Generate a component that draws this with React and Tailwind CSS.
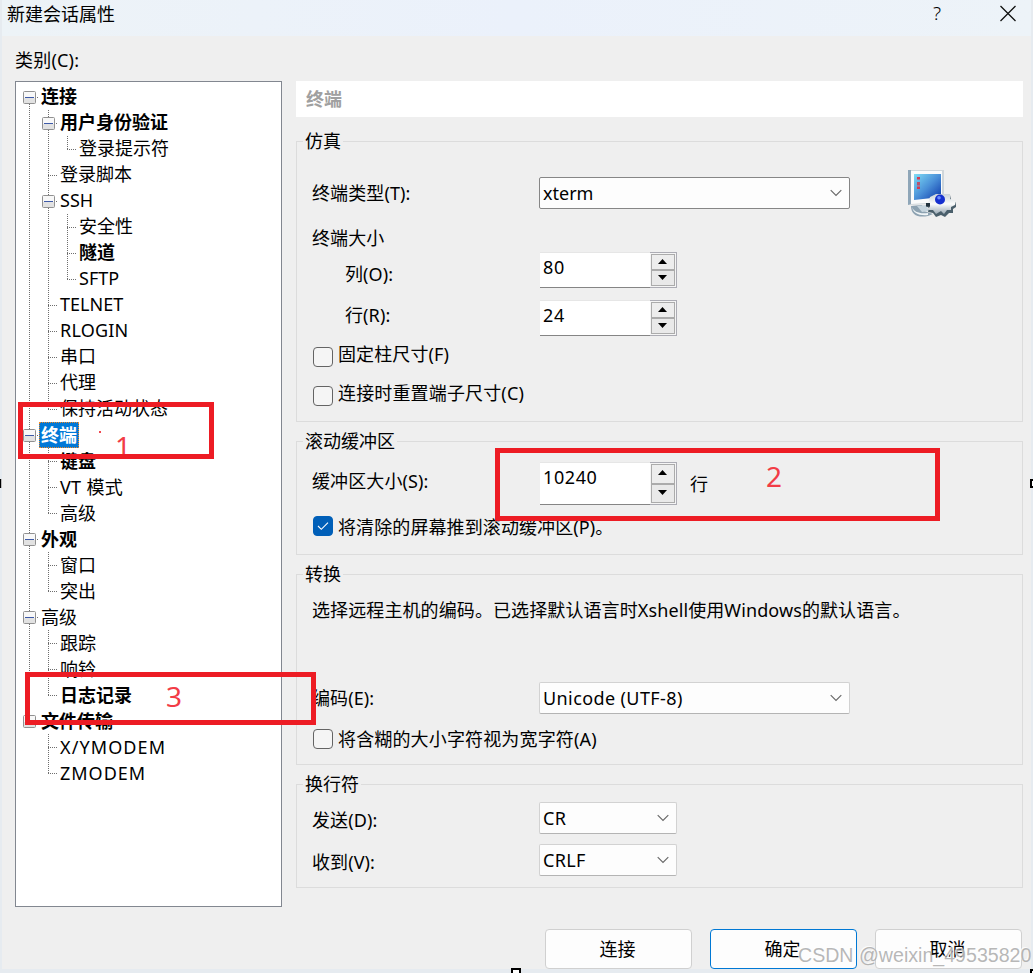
const TREE = [
  { text: "连接", level: 0, open: true, bold: true, first: true },
  { text: "用户身份验证", level: 1, open: true, bold: true },
  { text: "登录提示符", level: 2, last: true },
  { text: "登录脚本", level: 1 },
  { text: "SSH", level: 1, open: true },
  { text: "安全性", level: 2 },
  { text: "隧道", level: 2, bold: true },
  { text: "SFTP", level: 2, last: true },
  { text: "TELNET", level: 1 },
  { text: "RLOGIN", level: 1, wide: "tracking-[0.2px]" },
  { text: "串口", level: 1 },
  { text: "代理", level: 1 },
  { text: "保持活动状态", level: 1, last: true },
  { text: "终端", level: 0, open: true, bold: true, selected: true },
  { text: "键盘", level: 1, bold: true },
  { text: "VT 模式", level: 1, wide: "tracking-[0.3px]" },
  { text: "高级", level: 1, last: true },
  { text: "外观", level: 0, open: true, bold: true },
  { text: "窗口", level: 1 },
  { text: "突出", level: 1, last: true },
  { text: "高级", level: 0, open: true },
  { text: "跟踪", level: 1 },
  { text: "响铃", level: 1 },
  { text: "日志记录", level: 1, bold: true, last: true },
  { text: "文件传输", level: 0, open: true, bold: true, last: true },
  { text: "X/YMODEM", level: 1, endBranch: true, wide: "tracking-[1.1px]" },
  { text: "ZMODEM", level: 1, last: true, endBranch: true, wide: "tracking-[1px]" },
];

const dots = { stroke: "#6e6e6e", strokeWidth: 1, strokeDasharray: "1 1" };

// Dotted connector in front of a tree label
function Guide({ node }) {
  return (
    <svg width="19" height="26" className="shrink-0">
      {!node.first && <line x1="6.5" x2="6.5" y1="0" y2="14" {...dots} />}
      {!node.last && <line x1="6.5" x2="6.5" y1="14" y2="26" {...dots} />}
      <line x1="6" x2="16" y1="13.5" y2="13.5" {...dots} />
      {node.open && (
        <>
          <rect x="0.5" y="7.5" width="12" height="12" rx="1" fill="#f8f8f8" stroke="#919191" />
          <rect x="1" y="14" width="11" height="5" fill="#e2e2e2" />
          <line x1="2" x2="11" y1="13.5" y2="13.5" stroke="#3e5aa8" />
        </>
      )}
    </svg>
  );
}

function Trunk({ visible }) {
  return (
    <svg width="19" height="26" className="shrink-0">
      {visible && <line x1="6.5" x2="6.5" y1="0" y2="26" {...dots} />}
    </svg>
  );
}

function TreeRow({ node, raised }) {
  return (
    <div className="flex h-[26px] items-center">
      {node.level > 0 && <Trunk visible={!node.endBranch} />}
      {node.level > 1 && <Trunk visible />}
      <Guide node={node} />
      <span
        className={`-ml-[3px] h-[26px] whitespace-nowrap border border-dotted px-px ${
          raised ? "leading-[22px]" : "leading-[24px]"
        } ${node.bold ? "font-bold" : ""} ${node.wide || ""} ${
          node.selected ? "border-[#f08a28] bg-[#0078d7] text-white" : "border-transparent"
        }`}
      >
        {node.text}
      </span>
    </div>
  );
}

function Group({ title, className, children }) {
  return (
    <fieldset className={`border border-[#dcdcdc] ${className}`}>
      <legend className="ml-[6px] h-[26px] px-[2px] leading-[26px]">{title}</legend>
      <div className="pl-4">{children}</div>
    </fieldset>
  );
}

function Select({ value, className }) {
  return (
    <div className={`flex h-8 items-center justify-between rounded-[2px] border bg-[#fdfdfd] pl-[3px] pr-[7px] ${className}`}>
      <span className="-mt-px leading-[28px]">{value}</span>
      <svg width="12" height="8" viewBox="0 0 12 8" fill="none" stroke="#666" strokeWidth="1.1">
        <path d="M0.7 1.2 L6 6.5 L11.3 1.2" />
      </svg>
    </div>
  );
}

function Spinner({ value, className }) {
  return (
    <div className={`flex w-[138px] ${className}`}>
      <div className="ml-px w-[110px] border-b border-t border-b-[#858585] border-t-[#e6e6e6] bg-white pl-[3px] leading-[29px] tracking-[0.6px]">
        {value}
      </div>
      <div className="flex flex-1 flex-col border-y border-r border-[#acacb4] bg-[#f5f5f5] p-px">
        <div className="flex flex-1 items-center justify-center border border-[#ababab] bg-[#ededed] pr-px pb-[2px]">
          <svg width="9" height="5"><path d="M0 5 L4.5 0 L9 5 Z" /></svg>
        </div>
        <div className="flex flex-1 items-center justify-center border border-[#ababab] bg-[#e9e9e9] pr-px pb-[2px]">
          <svg width="9" height="5"><path d="M0 0 L4.5 5 L9 0 Z" /></svg>
        </div>
      </div>
    </div>
  );
}

function Checkbox({ label, checked, className, textClass }) {
  return (
    <div className={`flex h-5 ${className}`}>
      <div
        className={`flex h-5 w-5 items-center justify-center rounded-[4px] border ${
          checked ? "border-[#005fb8] bg-[#005fb8]" : "border-[#646464] bg-[#f5f5f5]"
        }`}
      >
        {checked && (
          <svg width="12" height="10" fill="none" stroke="#fff" strokeWidth="1.1">
            <path d="M1 5 L4.3 8.3 L11 1.6" />
          </svg>
        )}
      </div>
      <span className={`ml-[5px] whitespace-nowrap leading-5 ${textClass}`}>{label}</span>
    </div>
  );
}

function TerminalIcon() {
  return (
    <svg width="49" height="50" viewBox="0 0 49 50" className="ml-[58px] mt-px">
      <defs>
        <linearGradient id="screen" x1="0" y1="0" x2="1" y2="1">
          <stop offset="0" stopColor="#7fdcf5" />
          <stop offset="0.5" stopColor="#4a90d8" />
          <stop offset="1" stopColor="#0a35a8" />
        </linearGradient>
        <linearGradient id="metal" x1="0" y1="0" x2="0" y2="1">
          <stop offset="0" stopColor="#c9d2d9" />
          <stop offset="0.5" stopColor="#fbfcfc" />
          <stop offset="1" stopColor="#9aa9b4" />
        </linearGradient>
      </defs>
      {/* Stand */}
      <path d="M3 36 C3 45 10 48 20 46 L25 44 L16 41 L14 35 Z" fill="#8da2b1" />
      <path d="M4 37 C6 42 11 44 20 43 L20 45 C11 46 5 43 4 37 Z" fill="#f0f5f7" />
      <path d="M9 36 L18 35 L21 41 L14 42 Z" fill="#c6d5de" />
      {/* Monitor */}
      <path d="M0 0 L36 0 L36 33 L0 35 Z" fill="#cfd6da" />
      <path d="M0 0 L3 0 L3 34 L0 35 Z" fill="#8fa6b8" />
      <path d="M3 1 L34 1 L34 32 L3 34 Z" fill="#fafbfb" />
      <path d="M6 4 L33 4 L33 27 L6 30 Z" fill="url(#screen)" />
      <rect x="9" y="7" width="3" height="2.5" fill="#d53a50" />
      <rect x="9" y="12" width="3" height="3.5" fill="#b9526c" />
      <rect x="9" y="16.5" width="3" height="2.5" fill="#d53a50" />
      {/* Gear */}
      <path
        d="M22 28 L28 25 L42 25 L43 30 L48 32 L48 37 L45 39 L45 43 L41 43 L37 47 L33 45 L28 47 L25 43 L20 42 L21 38 L18 36 L22 33 Z"
        fill="#4a5f6b"
      />
      <path
        d="M22 27 L28 24 L42 24 L42 29 L48 31 L47 35 L43 37 L43 40 L39 40 L36 44 L33 41 L28 44 L25 40 L20 40 L22 36 L20 33 Z"
        fill="url(#metal)"
      />
      <rect x="18" y="33" width="4" height="3.5" fill="#22333e" />
      <circle cx="32" cy="29.5" r="5" fill="#1530cf" />
      <circle cx="31" cy="27.8" r="1.8" fill="#6b8cff" />
    </svg>
  );
}

function Label({ className = "", children }) {
  return <div className={`-ml-px w-[227px] shrink-0 whitespace-nowrap leading-[26px] tracking-[0.1px] ${className}`}>{children}</div>;
}

function DialogButton({ primary, children }) {
  return (
    <button
      className={`h-10 w-[147px] rounded-[4px] border bg-[#fdfdfd] pr-[2px] leading-[26px] ${
        primary ? "border-[#0078d4]" : "border-[#d0d0d0]"
      }`}
    >
      {children}
    </button>
  );
}

export default function App() {
  return (
    <div className="relative h-[973px] w-[1033px] overflow-hidden bg-[#e6ebf0] px-[2px] font-['Noto_Sans','Noto_Sans_CJK_SC',sans-serif] text-[18px] text-black">
      <div className="h-[969px] bg-[#efefef]">
        {/* Title bar */}
        <div className="flex h-9 justify-between bg-linear-to-r from-[#edf3f7] via-[#ebf1fb] to-[#edf3f8] pl-[5px] pr-[15px]">
          <span className="leading-[28px]">新建会话属性</span>
          <div className="flex gap-[59px]">
            <span className="text-[19px] font-light leading-[26px]">?</span>
            <svg width="16" height="28" fill="none" stroke="#111" strokeWidth="1.3">
              <path d="M0.5 6 L15.5 21 M15.5 6 L0.5 21" />
            </svg>
          </div>
        </div>

        <div className="flex h-[871px] gap-[14px] pl-[13px]">
          {/* Categories */}
          <div className="w-[267px] shrink-0">
            <div className="mt-[11px] h-[34px] leading-[26px] tracking-[0.2px]">类别(C):</div>
            <div className="h-[826px] border border-[#828790] bg-white pl-[7px] pt-[2px]">
              {TREE.map((node, i) => (
                <TreeRow key={i} node={node} raised={i < 13} />
              ))}
            </div>
          </div>

          {/* Settings */}
          <div className="flex w-[727px] flex-col pt-[45px]">
            <div className="mb-[11px] h-9 bg-white pl-[10px] font-bold leading-[36px] text-[#a0a0a0]">终端</div>

            <div className="flex flex-col gap-[6px]">
              <Group title="仿真" className="h-[294px]">
                <div className="flex items-start pt-[15px]">
                  <Label className="mt-[11px]">终端类型(T):</Label>
                  <Select value="xterm" className="mt-2 w-[311px] border-[#868686]" />
                  <TerminalIcon />
                </div>
                <Label className="mt-[5px]">终端大小</Label>
                <div className="mt-px flex">
                  <Label className="mt-[9px] pl-[33px]">列(O):</Label>
                  <Spinner value="80" className="h-9" />
                </div>
                <div className="mt-3 flex">
                  <Label className="mt-[2px] pl-[33px]">行(R):</Label>
                  <Spinner value="24" className="h-9" />
                </div>
                <Checkbox label="固定柱尺寸(F)" className="mt-[11px]" textClass="-mt-[3px] tracking-[0.1px]" />
                <Checkbox label="连接时重置端子尺寸(C)" className="mt-[19px]" textClass="-mt-[3px] tracking-[0.15px]" />
              </Group>

              <Group title="滚动缓冲区" className="h-[127px]">
                <div className="flex pt-2">
                  <Label className="mt-[6px]">缓冲区大小(S):</Label>
                  <Spinner value="10240" className="h-[43px]" />
                  <span className="ml-[13px] mt-[9px] leading-[26px]">行</span>
                </div>
                <Checkbox
                  checked
                  label="将清除的屏幕推到滚动缓冲区(P)。"
                  className="mt-[11px]"
                  textClass="mt-px tracking-[0.1px]"
                />
              </Group>

              <Group title="转换" className="h-[204px]">
                <p className="-ml-px h-[95px] pt-[10px] leading-[26px] tracking-[0.1px]">
                  选择远程主机的编码。已选择默认语言时Xshell使用Windows的默认语言。
                </p>
                <div className="flex">
                  <Label className="mt-[3px]">编码(E):</Label>
                  <Select
                    value="Unicode (UTF-8)"
                    className="w-[311px] border-[#d2d2d2] border-b-[#b4b4b4] tracking-[0.4px]"
                  />
                </div>
                <Checkbox
                  label="将含糊的大小字符视为宽字符(A)"
                  className="mt-[15px]"
                  textClass="tracking-[0.15px]"
                />
              </Group>

              <Group title="换行符" className="h-[117px]">
                <div className="flex pt-[5px]">
                  <Label className="mt-[5px]">发送(D):</Label>
                  <Select value="CR" className="w-[138px] border-[#d2d2d2] border-b-[#b4b4b4] tracking-[0.3px]" />
                </div>
                <div className="mt-[10px] flex">
                  <Label className="mt-[5px]">收到(V):</Label>
                  <Select value="CRLF" className="w-[138px] border-[#d2d2d2] border-b-[#b4b4b4] tracking-[0.3px]" />
                </div>
              </Group>
            </div>
          </div>
        </div>

        <div className="mt-[22px] flex justify-end gap-[18px] pr-[9px]">
          <DialogButton>连接</DialogButton>
          <DialogButton primary>确定</DialogButton>
          <DialogButton>取消</DialogButton>
        </div>
      </div>

      {/* Annotations */}
      <span className="absolute left-[115px] top-[426px] text-[28px] leading-[40px] text-[#f23c46]">1</span>
      <span className="absolute left-[766px] top-[456px] text-[28px] leading-[40px] text-[#f23c46]">2</span>
      <span className="absolute left-[166px] top-[676px] text-[28px] leading-[40px] text-[#f23c46]">3</span>
      <div className="absolute left-[99px] top-[431px] h-[2px] w-[2px] bg-[#f04850]" />
      <div className="absolute left-[18px] top-[402px] h-[57px] w-[196px] border-[5px] border-[#ed1c24]" />
      <div className="absolute left-[495px] top-[448px] h-[73px] w-[445px] border-[5px] border-[#ed1c24]" />
      <div className="absolute left-[25px] top-[672px] h-[53px] w-[291px] border-[5px] border-[#ed1c24]" />

      {/* Resize handles */}
      <div className="absolute left-0 top-[479px] h-[9px] w-[2px] border-r border-[#bbb] bg-black" />
      <div className="absolute -right-[6px] top-[479px] h-[9px] w-[9px] border-2 border-black bg-white" />
      <div className="absolute left-[511px] top-[968px] h-[9px] w-[10px] border-2 border-black bg-white" />
      <div className="absolute -right-[6px] top-[969px] h-[9px] w-[9px] border-2 border-black bg-white" />

      <span className="absolute left-[798px] top-[942px] whitespace-nowrap font-['Liberation_Sans',sans-serif] text-[19.6px] leading-[26px] text-[#a0a0a0]/75 [text-shadow:-1px_-1px_0_rgba(255,255,255,0.8)]">
        CSDN @weixin_49535820
      </span>
    </div>
  );
}
